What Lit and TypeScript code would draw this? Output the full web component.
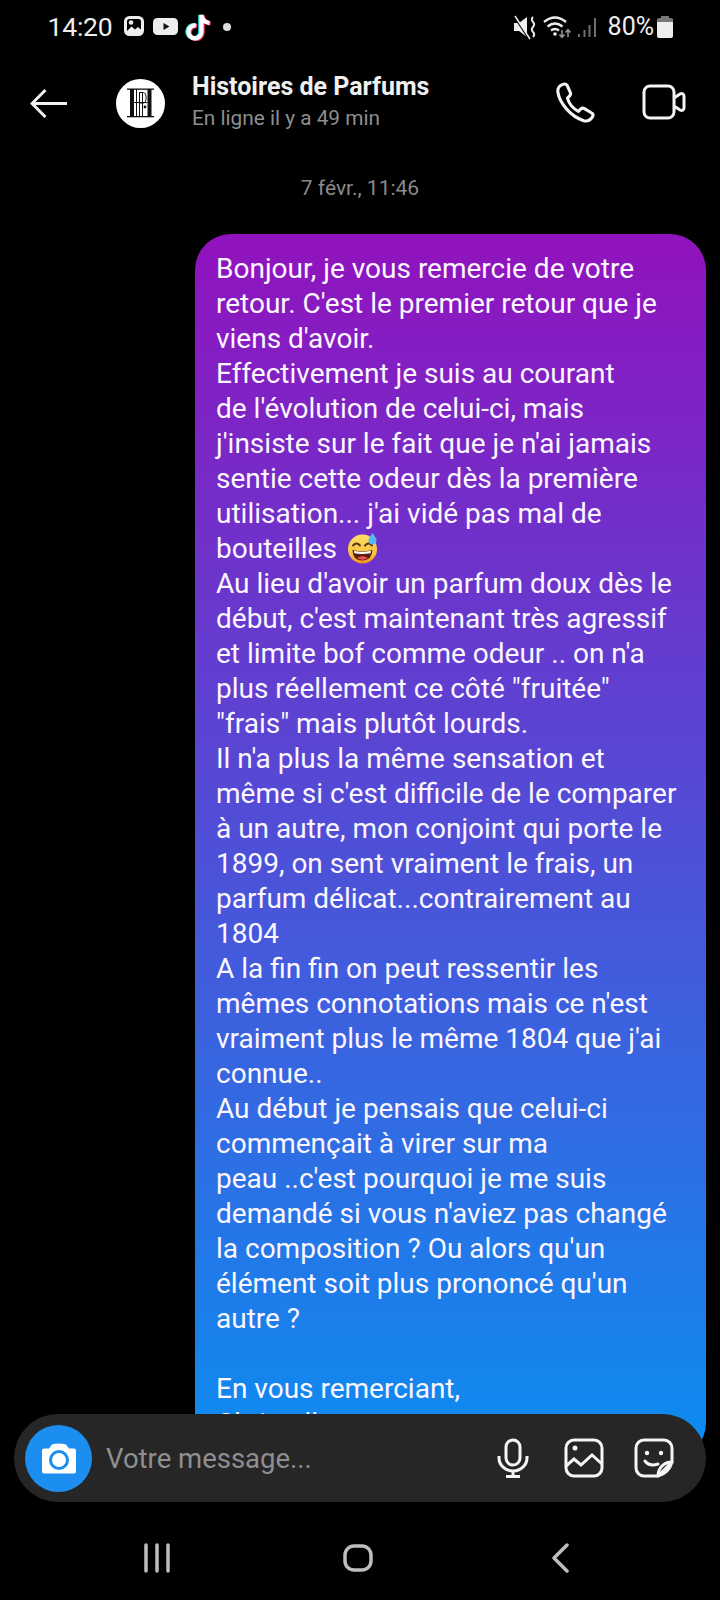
import { LitElement, html, css, svg } from "lit";
import { customElement } from "lit/decorators.js";

const LINES = [
  "Bonjour, je vous remercie de votre",
  "retour. C'est le premier retour que je",
  "viens d'avoir.",
  "Effectivement je suis au courant",
  "de l'évolution de celui-ci, mais",
  "j'insiste sur le fait que je n'ai jamais",
  "sentie cette odeur dès la première",
  "utilisation... j'ai vidé pas mal de",
  "bouteilles @",
  "Au lieu d'avoir un parfum doux dès le",
  "début, c'est maintenant très agressif",
  "et limite bof comme odeur .. on n'a",
  'plus réellement ce côté "fruitée"',
  '"frais" mais plutôt lourds.',
  "Il n'a plus la même sensation et",
  "même si c'est difficile de le comparer",
  "à un autre, mon conjoint qui porte le",
  "1899, on sent vraiment le frais, un",
  "parfum délicat...contrairement au",
  "1804",
  "A la fin fin on peut ressentir les",
  "mêmes connotations mais ce n'est",
  "vraiment plus le même 1804 que j'ai",
  "connue..",
  "Au début je pensais que celui-ci",
  "commençait à virer sur ma",
  "peau ..c'est pourquoi je me suis",
  "demandé si vous n'aviez pas changé",
  "la composition ? Ou alors qu'un",
  "élément soit plus prononcé qu'un",
  "autre ?",
  "\u00a0",
  "En vous remerciant,",
  "Christelle",
];

const emoji = svg`<svg class="emoji" viewBox="0 0 32 32">
  <defs><linearGradient id="eg" x1="0" y1="0" x2="0" y2="1"><stop offset="0" stop-color="#ffe067"/><stop offset=".7" stop-color="#fbbf3a"/><stop offset="1" stop-color="#ee9420"/></linearGradient></defs>
  <circle cx="15.500" cy="17" r="14.500" fill="url(#eg)"/>
  <path d="M6 13.500q3.500-4 7 0M18 13.500q3.500-4 7 0" fill="none" stroke="#5b3a10" stroke-width="2" stroke-linecap="round"/>
  <path d="M5.500 18q10 2.500 20 0q-.5 10-10 10.500t-10-10.500z" fill="#5a1f12"/>
  <path d="M7 18.800q8.500 2 17 0l-.4 2.500q-8 1.500-16.200 0z" fill="#fff"/>
  <path d="M10 26q5.500-3.500 11 0q-5.500 3.500-11 0z" fill="#f0524f"/>
  <path d="M25.500 1q-4 5-4 7.500a4 4 0 0 0 8 0q0-2.500-4-7.500z" fill="#58b7ee"/>
</svg>`;

@customElement("app-root")
export class AppRoot extends LitElement {
  static styles = css`
    :host { display: block; width: 720px; height: 1600px; background: #000; color: #fff; font-family: Roboto, "Noto Sans", sans-serif; position: relative; overflow: hidden; }
    .status { height: 53px; display: flex; align-items: center; padding: 0 0 0 47.500px; box-sizing: border-box; }
    .time { font-size: 26.500px; color: #eee; width: 76px; letter-spacing: -.2px; }
    .st-left { display: flex; align-items: center; }
    .st-right { margin-left: auto; display: flex; align-items: center; padding-right: 47px; color: #eee; }
    .st-icons { width: 86px; height: 26px; margin-right: 10px; }
    .pct { font-size: 25px; margin: 0 3px 0 0; }
    .dot { margin-left: 6px; }
    .head { height: 100px; display: flex; align-items: center; position: relative; }
    .back { width: 38px; height: 30px; margin: 0 0 0 30px; }
    .avatar { width: 49px; height: 49px; margin-left: 48px; flex: none; }
    .who { margin-left: 27px; flex: 1; display: flex; flex-direction: column; gap: 3px; margin-top: -4px; }
    .name { font-size: 25px; font-weight: 700; color: #f0f0f0; line-height: 30px; }
    .seen { font-size: 20.800px; color: #8e8e8e; line-height: 26px; }
    .actions { display: flex; align-items: center; gap: 44px; padding-right: 34px; margin-top: -2px; }
    .date { text-align: center; color: #8a8a8a; font-size: 21px; line-height: 26px; margin-top: 22px; }
    .thread { height: 1300px; overflow: hidden; }
    .bubble { margin: 33px 14px 0 195px; border-radius: 36px; padding: 17px 0 0 21px; height: 1225px; box-sizing: border-box; overflow: hidden; background: linear-gradient(180deg, #9112bd 0%, #0c8df1 100%); }
    .line { font-size: 28px; line-height: 35px; white-space: pre; color: #fbf6ff; }
    .emoji { width: 32px; height: 32px; vertical-align: -6px; margin-left: 3px; }
    .composer { position: absolute; left: 14px; top: 1414px; width: 692px; height: 88px; border-radius: 44px; background: #262626; display: flex; align-items: center; box-sizing: border-box; padding: 0 0 0 11px; }
    .cam { width: 67px; height: 67px; border-radius: 50%; background: #1c8ef0; display: flex; align-items: center; justify-content: center; flex: none; }
    .ph { margin-left: 14px; font-size: 27.500px; color: #8f8f8f; flex: 1; }
    .tools { display: flex; align-items: center; padding-right: 32px; }
    .mic { margin-right: 35px; }
    .pic { margin-right: 30px; }
    .nav { position: absolute; left: 0; right: 0; top: 1543px; height: 30px; }
    .navi { position: absolute; top: 0; }
    .n1 { left: 142px; }
    .n2 { left: 342px; }
    .n3 { left: 549px; }
  `;

  render() {
    return html`
      <div class="status">
        <span class="time">14:20</span>
        <div class="st-left">
          <svg width="90" height="28" viewBox="0 0 90 28">
            <rect x="1.500" y="4.500" width="17" height="17" rx="4" fill="#000" stroke="#eee" stroke-width="3"/>
            <path d="M2.500 18.500l5-5 3.500 3 3-2.500 4 3.500v3H2.500z" fill="#eee"/><circle cx="7" cy="9.500" r="2.300" fill="#eee"/>
            <rect x="29" y="5" width="25" height="17" rx="4.500" fill="#eee"/><path d="M39.500 10l6 3.500-6 3.500z" fill="#111"/>
            <g fill="none" stroke-width="4.200">
              <path d="M72 12.500a6.500 6.500 0 1 0 5.500 6.500V2c.5 4.500 3.500 7.500 8 8" stroke="#25e0e6" transform="translate(-1.200 -.3)"/>
              <path d="M72 12.500a6.500 6.500 0 1 0 5.500 6.500V2c.5 4.500 3.500 7.500 8 8" stroke="#f5305d" transform="translate(1.200 .6)"/>
              <path d="M72 12.500a6.500 6.500 0 1 0 5.500 6.500V2c.5 4.500 3.500 7.500 8 8" stroke="#fff"/>
            </g>
          </svg>
          <svg class="dot" width="14" height="14" viewBox="0 0 14 14"><circle cx="7" cy="7" r="4" fill="#ddd"/></svg>
        </div>
        <div class="st-right">
          <svg class="st-icons" viewBox="0 0 86 26">
            <path d="M2 9h5l8-6v20l-8-6H2z" fill="#eee"/><path d="M2 2l15 23" stroke="#000" stroke-width="2"/><path d="M3 2l15 23" stroke="#eee" stroke-width="1.500"/>
            <path d="M21 3q-2.500 2.500 0 5t0 5 0 5 0 5" fill="none" stroke="#eee" stroke-width="1.800"/>
            <path d="M32 8q11-9 22 0M35.500 12.500q7.500-6 15 0M39 16.500q4-3 8 0" fill="none" stroke="#eee" stroke-width="2.300"/>
            <circle cx="43" cy="20" r="1.800" fill="#eee"/>
            <path d="M50 16v7m-2.500-2.500l2.500 2.800 2.500-2.800" fill="none" stroke="#999" stroke-width="1.500"/>
            <path d="M56 23v-7m-2.500 2.500l2.500-2.800 2.500 2.800" fill="none" stroke="#999" stroke-width="1.500"/>
            <path d="M67 23v-3M72.500 23v-7M77.500 23v-12M83 23V4" stroke="#6e6e6e" stroke-width="2"/>
          </svg>
          <span class="pct">80%</span>
          <svg width="16" height="22" viewBox="0 0 16 22"><path d="M4.500 0h7v2.500H14a2 2 0 0 1 2 2V20a2 2 0 0 1-2 2H2a2 2 0 0 1-2-2V4.500a2 2 0 0 1 2-2h2.500z" fill="#eee"/><path d="M4.500 0h7v2.500H14a2 2 0 0 1 2 2V6H0V4.500a2 2 0 0 1 2-2h2.500z" fill="#777"/></svg>
        </div>
      </div>
      <div class="head">
        <svg class="back" viewBox="0 0 38 30"><path d="M37 15.500H3M15.500 2L2 15.500 15.500 29" fill="none" stroke="#f2f2f2" stroke-width="3"/></svg>
        <svg class="avatar" viewBox="0 0 49 49">
          <circle cx="24.500" cy="24.500" r="24.500" fill="#fff"/>
          <g fill="#111">
            <rect x="11" y="9.500" width="27" height="1.300"/>
            <rect x="11" y="37" width="27" height="1.300"/>
            <rect x="14" y="10" width="4" height="28"/><rect x="31.500" y="10" width="4" height="28"/>
            <rect x="20" y="10" width="1" height="28"/>
            <rect x="18" y="23" width="13.500" height="1"/>
            <rect x="23" y="13" width="1" height="25"/><rect x="26" y="13" width="1" height="25"/>
            <circle cx="29" cy="28" r="1.400"/>
          </g>
          <path d="M24 13.500h3.500a2.500 5 0 0 1 0 10.500H24" fill="none" stroke="#111"/>
        </svg>
        <div class="who"><div class="name">Histoires de Parfums</div><div class="seen">En ligne il y a 49 min</div></div>
        <div class="actions">
          <svg width="44" height="44" viewBox="0 0 40 40"><path d="M8 4c-3 1-5 3-4.500 7C5 21 15 33 27 37c3.500 1 6-.5 8-3.500 .8-1.500.5-2.800-.8-3.500l-6.500-4c-1.500-.8-2.500-.5-3.500.5l-2 2c-5-2.500-8.500-7-10-12l2-2c1-1 1.200-2 .5-3.500L12 5c-.8-1.300-2.500-1.600-4-1z" fill="none" stroke="#f5f5f5" stroke-width="2.800" stroke-linejoin="round"/></svg>
          <svg width="44" height="36" viewBox="0 0 44 36"><rect x="2" y="2" width="30" height="32" rx="6" fill="none" stroke="#f5f5f5" stroke-width="3"/><path d="M32 14l6-4c2-1 4 0 4 2v12c0 2-2 3-4 2l-6-4" fill="none" stroke="#f5f5f5" stroke-width="3" stroke-linejoin="round"/></svg>
        </div>
      </div>
      <div class="date">7 févr., 11:46</div>
      <div class="thread">
        <div class="bubble">
          ${LINES.map((l) =>
            l.endsWith("@")
              ? html`<div class="line">${l.slice(0, -1)}${emoji}</div>`
              : html`<div class="line">${l}</div>`
          )}
        </div>
      </div>
      <div class="composer">
        <div class="cam">
          <svg width="36" height="32" viewBox="0 0 36 32"><path d="M11 2.500q7-2 14 0l3 4h5a2 2 0 0 1 2 2v21a2 2 0 0 1-2 2H3a2 2 0 0 1-2-2v-21a2 2 0 0 1 2-2h5z" fill="#fff"/><circle cx="18" cy="18" r="8.500" fill="none" stroke="#1c8ef0" stroke-width="3"/></svg>
        </div>
        <div class="ph">Votre message...</div>
        <div class="tools">
          <svg class="mic" width="32" height="40" viewBox="0 0 32 40"><rect x="9" y="2" width="14" height="25" rx="7" fill="none" stroke="#f5f5f5" stroke-width="3"/><path d="M2 18v2a14 13 0 0 0 28 0v-2M16 33v5M9 38.500h14" fill="none" stroke="#f5f5f5" stroke-width="3"/></svg>
          <svg class="pic" width="40" height="40" viewBox="0 0 40 40"><rect x="2" y="2" width="36" height="36" rx="8" fill="none" stroke="#f5f5f5" stroke-width="3"/><circle cx="11" cy="10" r="2.500" fill="#f5f5f5"/><path d="M2 28l8-7 7 6 11-10 10 9" fill="none" stroke="#f5f5f5" stroke-width="3"/></svg>
          <svg width="40" height="40" viewBox="0 0 40 40"><path d="M38 24V10a8 8 0 0 0-8-8H10a8 8 0 0 0-8 8v20a8 8 0 0 0 8 8h14z" fill="none" stroke="#f5f5f5" stroke-width="3" stroke-linejoin="round"/><path d="M24 38c0-8 6-14 14-14-2 7-7 12-14 14z" fill="none" stroke="#f5f5f5" stroke-width="3" stroke-linejoin="round"/><circle cx="13" cy="15" r="2.200" fill="#f5f5f5"/><circle cx="27" cy="15" r="2.200" fill="#f5f5f5"/><path d="M11 23c3 4 7 5 13 3" fill="none" stroke="#f5f5f5" stroke-width="3" stroke-linecap="round"/></svg>
        </div>
      </div>
      <div class="nav">
        <svg class="navi n1" width="30" height="30" viewBox="0 0 30 30"><path d="M4 2v26M15 2v26M26 2v26" stroke="#bdbdbd" stroke-width="3.500" stroke-linecap="round"/></svg>
        <svg class="navi n2" width="32" height="30" viewBox="0 0 32 30"><rect x="3" y="3" width="26" height="24" rx="9" fill="none" stroke="#bdbdbd" stroke-width="3.500"/></svg>
        <svg class="navi n3" width="22" height="30" viewBox="0 0 22 30"><path d="M18 2L5 15l13 13" fill="none" stroke="#bdbdbd" stroke-width="3.500" stroke-linecap="round" stroke-linejoin="round"/></svg>
      </div>
    `;
  }
}
